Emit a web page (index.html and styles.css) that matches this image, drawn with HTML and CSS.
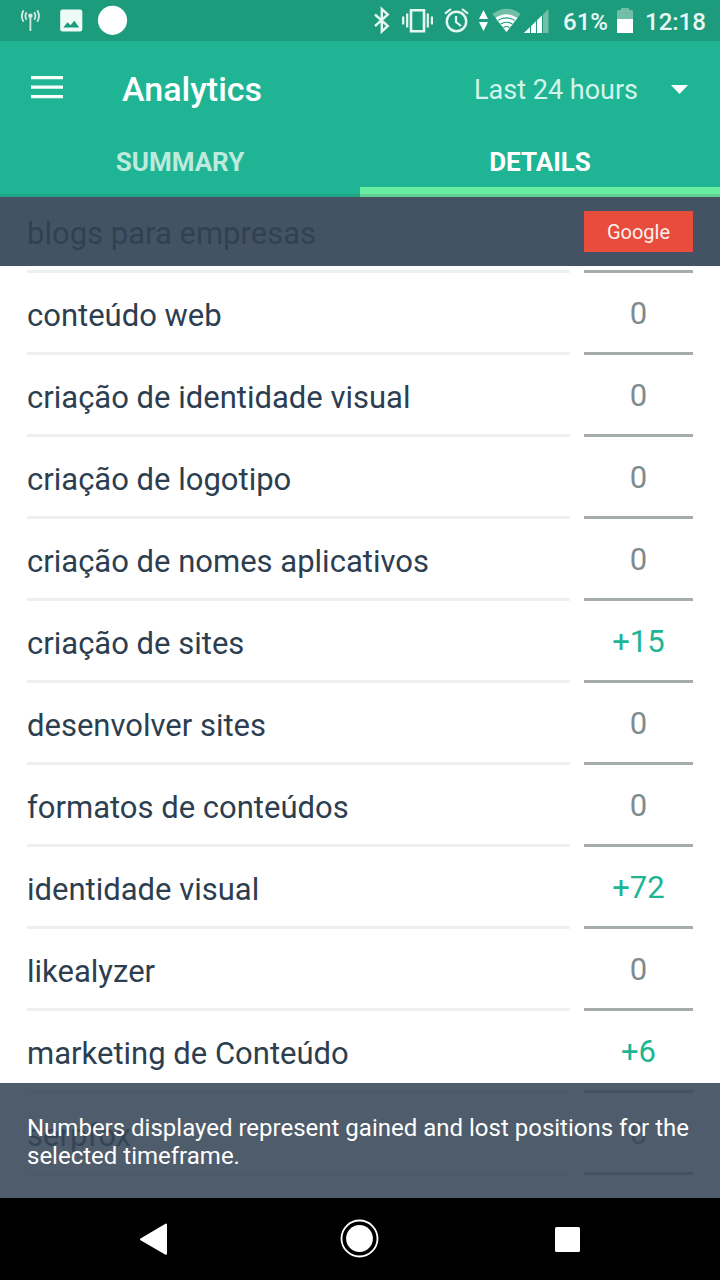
FILE: index.html
```html
<!DOCTYPE html>
<html lang="pt">
<head>
<meta charset="utf-8">
<title>Analytics</title>
<link rel="stylesheet" href="styles.css">
</head>
<body>
<div class="phone">
  <div class="status">
    <svg class="status-left" width="150" height="41" viewBox="0 0 150 41">
      <g fill="none" stroke="#d3ece3" stroke-width="1.800">
        <path d="M30.400 16v15"/>
        <path d="M26.600 12.200q-2.400 3.800 0 7.600M34.200 12.200q2.400 3.800 0 7.600M23.600 10.200q-3.600 5.800 0 11.600M37.200 10.200q3.600 5.800 0 11.600"/>
      </g>
      <circle cx="30.400" cy="15.800" r="2.300" fill="#d3ece3"/>
      <path fill="#eefaf5" fill-rule="evenodd" d="M62.500 9.500h17.500a2.300 2.300 0 0 1 2.300 2.300v17.400a2.300 2.300 0 0 1-2.300 2.300H62.500a2.300 2.300 0 0 1-2.300-2.300V11.800a2.300 2.300 0 0 1 2.300-2.300zM63.300 27.500h16l-5-6.700-3.800 4.400-2.900-3z"/>
      <circle cx="112.500" cy="20.300" r="14.600" fill="#fff"/>
    </svg>
    <div class="status-right">
      <svg width="182" height="41" viewBox="370 0 182 41">
        <g fill="none" stroke="#e6f7f1">
          <path stroke-width="2.400" d="M375 14.500l12.800 11.500-6 5.500V9l6 5.500L375 26.200"/>
          <path stroke-width="2.600" d="M411 10.200h13v21h-13z"/>
          <path stroke-width="2.200" d="M407.200 13.500v14M403.200 16.500v8M427.800 13.500v14M431.900 16.500v8"/>
          <circle stroke-width="2.400" cx="456.500" cy="21.500" r="9.700"/>
          <path stroke-width="2.200" d="M456 16v6l5 4M445 13.600l6-4.600M468 13.600l-6-4.600"/>
        </g>
        <path fill="#fff" d="M479 19l4.500-9 4.500 9zM479 22l4.500 9 4.500-9z"/>
        <path fill="#70bfa6" d="M492.500 14q14-10.500 28 0l-14 18z"/>
        <path fill="#fff" d="M495.600 18q10.900-7.500 21.800 0l-10.900 14z"/>
        <path fill="none" stroke="#1d9b7d" stroke-width="1.100" d="M498 20.400q8.500-5 17 0M500.700 24q5.800-3.500 11.600 0M503.400 27.500q3.100-2 6.200 0"/>
        <path fill="#70bfa6" d="M524 33L548.500 9v24z"/>
        <path fill="#fff" d="M524 33L542 15.400v17.600z"/>
        <path fill="none" stroke="#1d9b7d" stroke-width="1" d="M530.500 24v9M536.500 18v15M542.500 12v21"/>
      </svg>
      <span class="status-text percent">61%</span>
      <svg class="battery" width="16" height="41" viewBox="0 0 16 41">
        <path fill="#70bfa6" d="M0 11.500Q0 10 1.500 10H4V8h8v2h2.500q1.500 0 1.500 1.500V19H0z"/>
        <path fill="#fff" d="M0 19h16v14H0z"/>
      </svg>
      <span class="status-text clock">12:18</span>
    </div>
  </div>
  <header class="header">
    <div class="appbar">
      <svg class="burger" width="32" height="23" viewBox="0 0 32 23"><path fill="#f5fffb" d="M0 0h32v3.300H0zM0 9.500h32v3.300H0zM0 19h32v3.300H0z"/></svg>
      <h1 class="title">Analytics</h1>
      <span class="period">Last 24 hours</span>
      <svg class="caret" width="17" height="10" viewBox="0 0 17 10"><path fill="#fff" d="M0 0h17L8.500 9z"/></svg>
    </div>
    <nav class="tabs">
      <span class="tab">SUMMARY</span>
      <span class="tab active">DETAILS</span>
    </nav>
  </header>
  <main class="content">
    <div class="rows">
      <div class="row"><span class="name">blogs para empresas</span><span class="value"></span></div>
      <div class="row"><span class="name">conteúdo web</span><span class="value">0</span></div>
      <div class="row"><span class="name">criação de identidade visual</span><span class="value">0</span></div>
      <div class="row"><span class="name">criação de logotipo</span><span class="value">0</span></div>
      <div class="row"><span class="name">criação de nomes aplicativos</span><span class="value">0</span></div>
      <div class="row"><span class="name">criação de sites</span><span class="value gain">+15</span></div>
      <div class="row"><span class="name">desenvolver sites</span><span class="value">0</span></div>
      <div class="row"><span class="name">formatos de conteúdos</span><span class="value">0</span></div>
      <div class="row"><span class="name">identidade visual</span><span class="value gain">+72</span></div>
      <div class="row"><span class="name">likealyzer</span><span class="value">0</span></div>
      <div class="row"><span class="name">marketing de Conteúdo</span><span class="value gain">+6</span></div>
      <div class="row"><span class="name">serpfox</span><span class="value">0</span></div>
    </div>
    <div class="engines"><span class="engine">Google</span></div>
    <div class="note">Numbers displayed represent gained and lost positions for the selected timeframe.</div>
  </main>
  <footer class="navbar">
    <svg width="720" height="82" viewBox="0 0 720 82">
      <path fill="#fff" stroke="#fff" stroke-width="2" stroke-linejoin="round" d="M141 41.300L166 26.500v29.300z"/>
      <circle cx="359.500" cy="40.500" r="18" fill="none" stroke="#fff" stroke-width="1.800"/>
      <circle cx="359.500" cy="40.500" r="13.400" fill="#fff"/>
      <rect x="555" y="29" width="25" height="25" rx="1.500" fill="#fff"/>
    </svg>
  </footer>
</div>
</body>
</html>
```

FILE: styles.css
```css
* { box-sizing: border-box; }
body { margin: 0; font-family: Roboto, sans-serif; background: #fff; }
svg { display: block; flex: none; }
.phone { width: 720px; height: 1280px; display: flex; flex-direction: column; overflow: hidden; }
.status { height: 41px; flex: none; background: #1d9b7d; display: flex; justify-content: space-between; }
.status-right { display: flex; align-items: center; width: 350px; white-space: nowrap; }
.status-text { font-size: 24px; line-height: 28px; font-weight: 500; color: #e9f8f3; padding-top: 3px; }
.percent { width: 54px; margin-left: 11px; }
.battery { margin-right: 12px; }
.header { height: 156px; flex: none; background: #1fb594; display: flex; flex-direction: column; }
.appbar { height: 97px; display: flex; align-items: center; padding: 0 32px 0 31px; color: #fff; }
.burger { margin-top: -5px; }
.title { margin: -2px auto 0 59px; font-size: 34px; line-height: 40px; font-weight: 500; }
.period { font-size: 27px; line-height: 34px; color: #d3f4ea; margin-right: 33px; }
.tabs { flex: 1; display: grid; grid-template-columns: 1fr 1fr; box-shadow: inset 0 -3px #22a587; }
.tab { text-align: center; font-size: 26px; line-height: 30px; font-weight: 700; padding-top: 9px; color: #bdeadd; }
.tab.active { color: #fff; background: linear-gradient(to top, #62d196 3px, #66ee9e 3px, #66ee9e 10px, transparent 10px); }
.content { flex: 1; position: relative; overflow: hidden; background: #fff; }
.rows { margin-top: -6px; padding: 0 27px; }
.row { height: 82px; display: grid; grid-template-columns: 543px 109px; column-gap: 14px; }
.name { font-size: 31px; line-height: 36px; color: #2c3e50; padding-top: 25px; border-bottom: 3px solid #ecf0f1; white-space: nowrap; }
.value { font-size: 31px; line-height: 36px; color: #7f8c8d; padding-top: 23px; text-align: center; border-bottom: 3px solid #a5acac; }
.gain { color: #1fb594; }
.engines { position: absolute; top: 0; left: 0; right: 0; height: 69px; padding: 14px 27px; display: flex; justify-content: flex-end; background: rgba(47, 65, 83, .905); }
.engine { width: 109px; background: #e74c3c; color: #fdf0ee; font-size: 20px; line-height: 42px; text-align: center; }
.note { position: absolute; left: 0; right: 0; bottom: 0; height: 115px; padding: 31px 27px 0; background: rgba(54, 70, 87, .88); color: #fff; font-size: 24px; line-height: 28px; }
.navbar { height: 82px; flex: none; background: #000; }
```
